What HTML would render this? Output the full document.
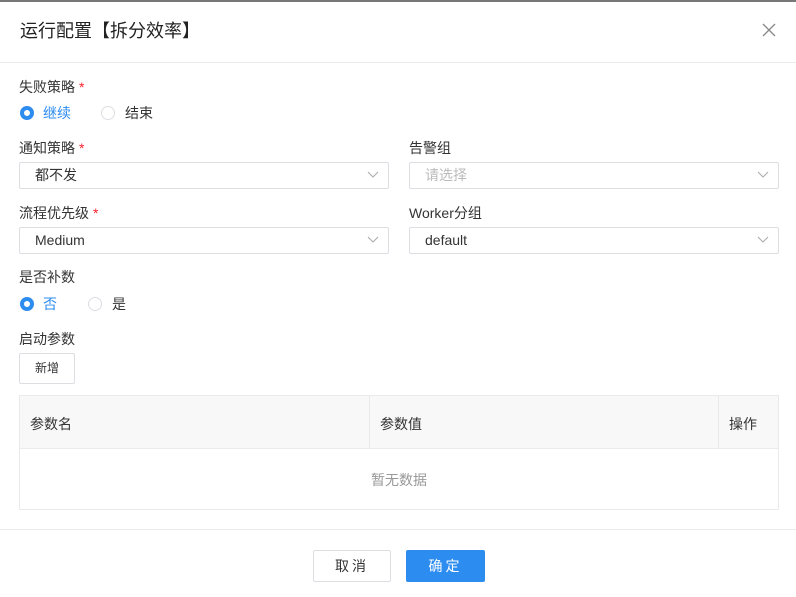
<!DOCTYPE html>
<html><head><meta charset="utf-8"><style>
*{margin:0;padding:0;box-sizing:border-box}
body{width:796px;height:597px;background:#fff;font-family:"Liberation Sans","Noto Sans CJK SC",sans-serif;color:#333;position:relative;overflow:hidden}
.a{position:absolute;white-space:nowrap}
.lbl{font-size:14px;color:#333;line-height:20px}
.req{color:#f5222d;margin-left:4px}
.sel{position:absolute;height:27px;border:1px solid #dcdee2;border-radius:2px;font-size:14px;line-height:25px;padding-left:15px;color:#333}
.sel svg{position:absolute;right:9px;top:8px}
.radio{position:absolute;width:14px;height:14px;border-radius:50%;border:1px solid #dcdee2}
.radio.on{border:4px solid #2d8cf0;background:#fff}
</style></head><body>
<div class="a" style="left:0;top:0;width:796px;height:2px;background:#777"></div>
<div class="a" style="left:20px;top:18px;font-size:18px;line-height:26px;color:#222">运行配置【拆分效率】</div>
<svg class="a" style="left:762px;top:23px" width="14" height="14" viewBox="0 0 14 14"><path d="M1 1L13 13M13 1L1 13" stroke="#888" stroke-width="1.3"/></svg>
<div class="a" style="left:0;top:62px;width:796px;height:1px;background:#e8eaec"></div>

<div class="a lbl" style="left:19px;top:77px">失败策略<span class="req">*</span></div>
<div class="radio on" style="left:20px;top:106px"></div>
<div class="a lbl" style="left:43px;top:103px;color:#2d8cf0">继续</div>
<div class="radio" style="left:101px;top:106px"></div>
<div class="a lbl" style="left:125px;top:103px">结束</div>

<div class="a lbl" style="left:19px;top:138px">通知策略<span class="req">*</span></div>
<div class="a lbl" style="left:409px;top:138px">告警组</div>
<div class="sel" style="left:19px;top:162px;width:370px">都不发<svg width="12" height="8"><path d="M1 1L6 6L11 1" stroke="#aaa" fill="none"/></svg></div>
<div class="sel" style="left:409px;top:162px;width:370px;color:#bbb">请选择<svg width="12" height="8"><path d="M1 1L6 6L11 1" stroke="#aaa" fill="none"/></svg></div>

<div class="a lbl" style="left:19px;top:203px">流程优先级<span class="req">*</span></div>
<div class="a lbl" style="left:409px;top:203px">Worker分组</div>
<div class="sel" style="left:19px;top:227px;width:370px">Medium<svg width="12" height="8"><path d="M1 1L6 6L11 1" stroke="#aaa" fill="none"/></svg></div>
<div class="sel" style="left:409px;top:227px;width:370px">default<svg width="12" height="8"><path d="M1 1L6 6L11 1" stroke="#aaa" fill="none"/></svg></div>

<div class="a lbl" style="left:19px;top:267px">是否补数</div>
<div class="radio on" style="left:20px;top:297px"></div>
<div class="a lbl" style="left:43px;top:294px;color:#2d8cf0">否</div>
<div class="radio" style="left:88px;top:297px"></div>
<div class="a lbl" style="left:112px;top:294px">是</div>

<div class="a lbl" style="left:19px;top:329px">启动参数</div>
<div class="a" style="left:19px;top:353px;width:56px;height:31px;border:1px solid #dcdee2;border-radius:2px;font-size:12px;line-height:29px;text-align:center">新增</div>

<div class="a" style="left:19px;top:395px;width:760px;height:115px;border:1px solid #e8eaec"></div>
<div class="a" style="left:20px;top:396px;width:758px;height:53px;background:#f8f8f9;border-bottom:1px solid #e8eaec"></div>
<div class="a" style="left:369px;top:396px;width:1px;height:53px;background:#e8eaec"></div>
<div class="a" style="left:718px;top:396px;width:1px;height:53px;background:#e8eaec"></div>
<div class="a" style="left:30px;top:414px;font-size:14px;line-height:20px">参数名</div>
<div class="a" style="left:380px;top:414px;font-size:14px;line-height:20px">参数值</div>
<div class="a" style="left:729px;top:414px;font-size:14px;line-height:20px">操作</div>
<div class="a" style="left:19px;top:470px;width:760px;text-align:center;font-size:14px;line-height:20px;color:#999">暂无数据</div>

<div class="a" style="left:0;top:529px;width:796px;height:1px;background:#e8eaec"></div>
<div class="a" style="left:313px;top:550px;width:78px;height:32px;border:1px solid #dcdee2;border-radius:2px;font-size:14px;line-height:30px;text-align:center;letter-spacing:3px">取消</div>
<div class="a" style="left:406px;top:550px;width:79px;height:32px;background:#2d8cf0;border-radius:2px;font-size:14px;line-height:32px;text-align:center;color:#fff;letter-spacing:3px">确定</div>
</body></html>
